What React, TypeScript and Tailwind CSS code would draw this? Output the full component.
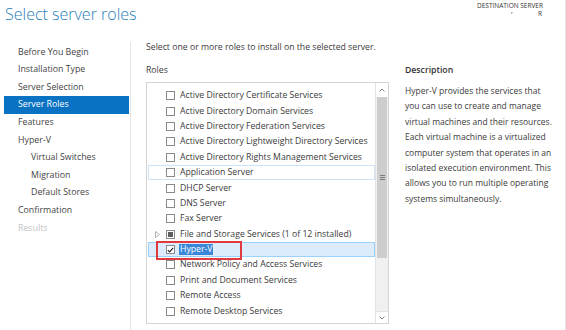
const NAV = [
  { label: "Before You Begin", indent: false },
  { label: "Installation Type", indent: false },
  { label: "Server Selection", indent: false },
  { label: "Server Roles", indent: false, active: true },
  { label: "Features", indent: false },
  { label: "Hyper-V", indent: false },
  { label: "Virtual Switches", indent: true },
  { label: "Migration", indent: true },
  { label: "Default Stores", indent: true },
  { label: "Confirmation", indent: false },
  { label: "Results", indent: false, disabled: true },
];

const ROLES = [
  "Active Directory Certificate Services",
  "Active Directory Domain Services",
  "Active Directory Federation Services",
  "Active Directory Lightweight Directory Services",
  "Active Directory Rights Management Services",
  "Application Server",
  "DHCP Server",
  "DNS Server",
  "Fax Server",
  "File and Storage Services (1 of 12 installed)",
  "Hyper-V",
  "Network Policy and Access Services",
  "Print and Document Services",
  "Remote Access",
  "Remote Desktop Services",
];

const DESCRIPTION = [
  "Hyper-V provides the services that",
  "you can use to create and manage",
  "virtual machines and their resources.",
  "Each virtual machine is a virtualized",
  "computer system that operates in an",
  "isolated execution environment. This",
  "allows you to run multiple operating",
  "systems simultaneously.",
];

function Checkbox({ state }: { state: "off" | "on" | "partial" }) {
  return (
    <span className="flex h-[9px] w-[9px] shrink-0 items-center justify-center border border-[#8a8a8a] bg-white">
      {state === "partial" && <span className="h-[5px] w-[5px] bg-[#5f5f5f]" />}
      {state === "on" && (
        <svg width="8" height="8" viewBox="0 0 8 8">
          <path d="M1 4.2 L3 6.2 L7 1.5" fill="none" stroke="#222" strokeWidth="1.3" />
        </svg>
      )}
    </span>
  );
}

function RoleRow({ label }: { label: string }) {
  const hyperv = label === "Hyper-V";
  const hover = label === "Application Server";
  const file = label.startsWith("File and Storage");
  return (
    <div
      className={`relative flex h-[15.4px] items-center border ${
        hyperv ? "border-[#99d1ff] bg-[#dcecfc]" : hover ? "border-[#cde3f7]" : "border-transparent"
      }`}
    >
      <span className="flex w-[17px] shrink-0 justify-center">
        {file && (
          <svg width="5" height="7" viewBox="0 0 5 7">
            <path d="M0.5 0.5 L4.5 3.5 L0.5 6.5 Z" fill="none" stroke="#a0a0a0" strokeWidth="0.8" />
          </svg>
        )}
      </span>
      <Checkbox state={hyperv ? "on" : file ? "partial" : "off"} />
      {hyperv ? (
        <span className="ml-[4px] bg-[#3a86d8] px-[1px] leading-[11px] text-white">{label}</span>
      ) : (
        <span className="ml-[5px] whitespace-nowrap">{label}</span>
      )}
      {hyperv && (
        <span className="pointer-events-none absolute left-[7px] top-[-2px] h-[19px] w-[86px] border-2 border-[#e0393e]" />
      )}
    </div>
  );
}

export default function App() {
  return (
    <div
      className="relative h-[330px] w-[566px] overflow-hidden bg-white text-[#3b3b3b]"
      style={{ fontFamily: '"Open Sans", "Noto Sans", sans-serif' }}
    >
      <div className="flex h-[42px] justify-between border-r border-[#e3e3e3]">
        <h1 className="pl-[5px] pt-[1px] text-[16px] font-light leading-[26px] text-[#2a80b8]">
          Select server roles
        </h1>
        <div className="pr-[22px] pt-[2px] text-right text-[6.5px] leading-[8px] text-[#333]">
          <div>DESTINATION SERVER</div>
          <div className="pr-[1px]">ʳ&nbsp;&nbsp;&nbsp;&nbsp;&nbsp;&nbsp;&nbsp;&nbsp;&nbsp;&nbsp;&nbsp;&nbsp;&nbsp;&nbsp;&nbsp;R</div>
        </div>
      </div>

      <div className="flex h-[288px] border-r border-[#e3e3e3]">
        <nav className="w-[131px] shrink-0 border-r border-[#e6e6e6] pl-[4px] pr-[1px] pt-[1.5px] text-[8.8px]">
          {NAV.map((n) => (
            <div
              key={n.label}
              className={`flex h-[17.6px] items-center ${n.indent ? "pl-[27px]" : "pl-[14px]"} ${
                n.active ? "bg-[#0a72c2] text-white" : n.disabled ? "text-[#c4c4c4]" : "text-[#444]"
              }`}
            >
              {n.label}
            </div>
          ))}
        </nav>

        <main className="flex flex-1 pl-[15px] text-[8.7px]">
          <div className="w-[243px] shrink-0">
            <p className="flex h-[11px] items-center">Select one or more roles to install on the selected server.</p>
            <p className="mt-[12px] flex h-[11px] items-center">Roles</p>
            <div className="mt-[6px] flex h-[242px] border border-[#d4d4d4]">
              <div className="flex-1 pl-[1px] pt-[5px]">
                {ROLES.map((r) => (
                  <RoleRow key={r} label={r} />
                ))}
              </div>
              <div className="flex w-[13px] shrink-0 flex-col border-l border-[#e2e2e2] bg-[#f0f0f0]">
                <div className="flex h-[14px] items-center justify-center bg-white">
                  <svg width="6" height="4" viewBox="0 0 6 4">
                    <path d="M0.5 3.5 L3 1 L5.5 3.5" fill="none" stroke="#707070" strokeWidth="0.9" />
                  </svg>
                </div>
                <div className="mx-[1px] flex h-[161px] items-center justify-center bg-[#cdcdcd]">
                  <div className="flex flex-col gap-[1px]">
                    <span className="h-px w-[5px] bg-[#7a7a7a]" />
                    <span className="h-px w-[5px] bg-[#7a7a7a]" />
                    <span className="h-px w-[5px] bg-[#7a7a7a]" />
                  </div>
                </div>
                <div className="flex-1" />
                <div className="flex h-[12px] items-center justify-center border-t border-[#e2e2e2] bg-white">
                  <svg width="6" height="4" viewBox="0 0 6 4">
                    <path d="M0.5 0.5 L3 3 L5.5 0.5" fill="none" stroke="#707070" strokeWidth="0.9" />
                  </svg>
                </div>
              </div>
            </div>
          </div>

          <div className="pl-[16px] pr-[2px] pt-[23px]">
            <p className="flex h-[11px] items-center font-semibold text-[#333]">Description</p>
            <div className="mt-[7px] text-[8.5px] leading-[15.4px] text-[#3b3b3b]">
              {DESCRIPTION.map((line) => (
                <div key={line} className="whitespace-nowrap">
                  {line}
                </div>
              ))}
            </div>
          </div>
        </main>
      </div>
    </div>
  );
}
